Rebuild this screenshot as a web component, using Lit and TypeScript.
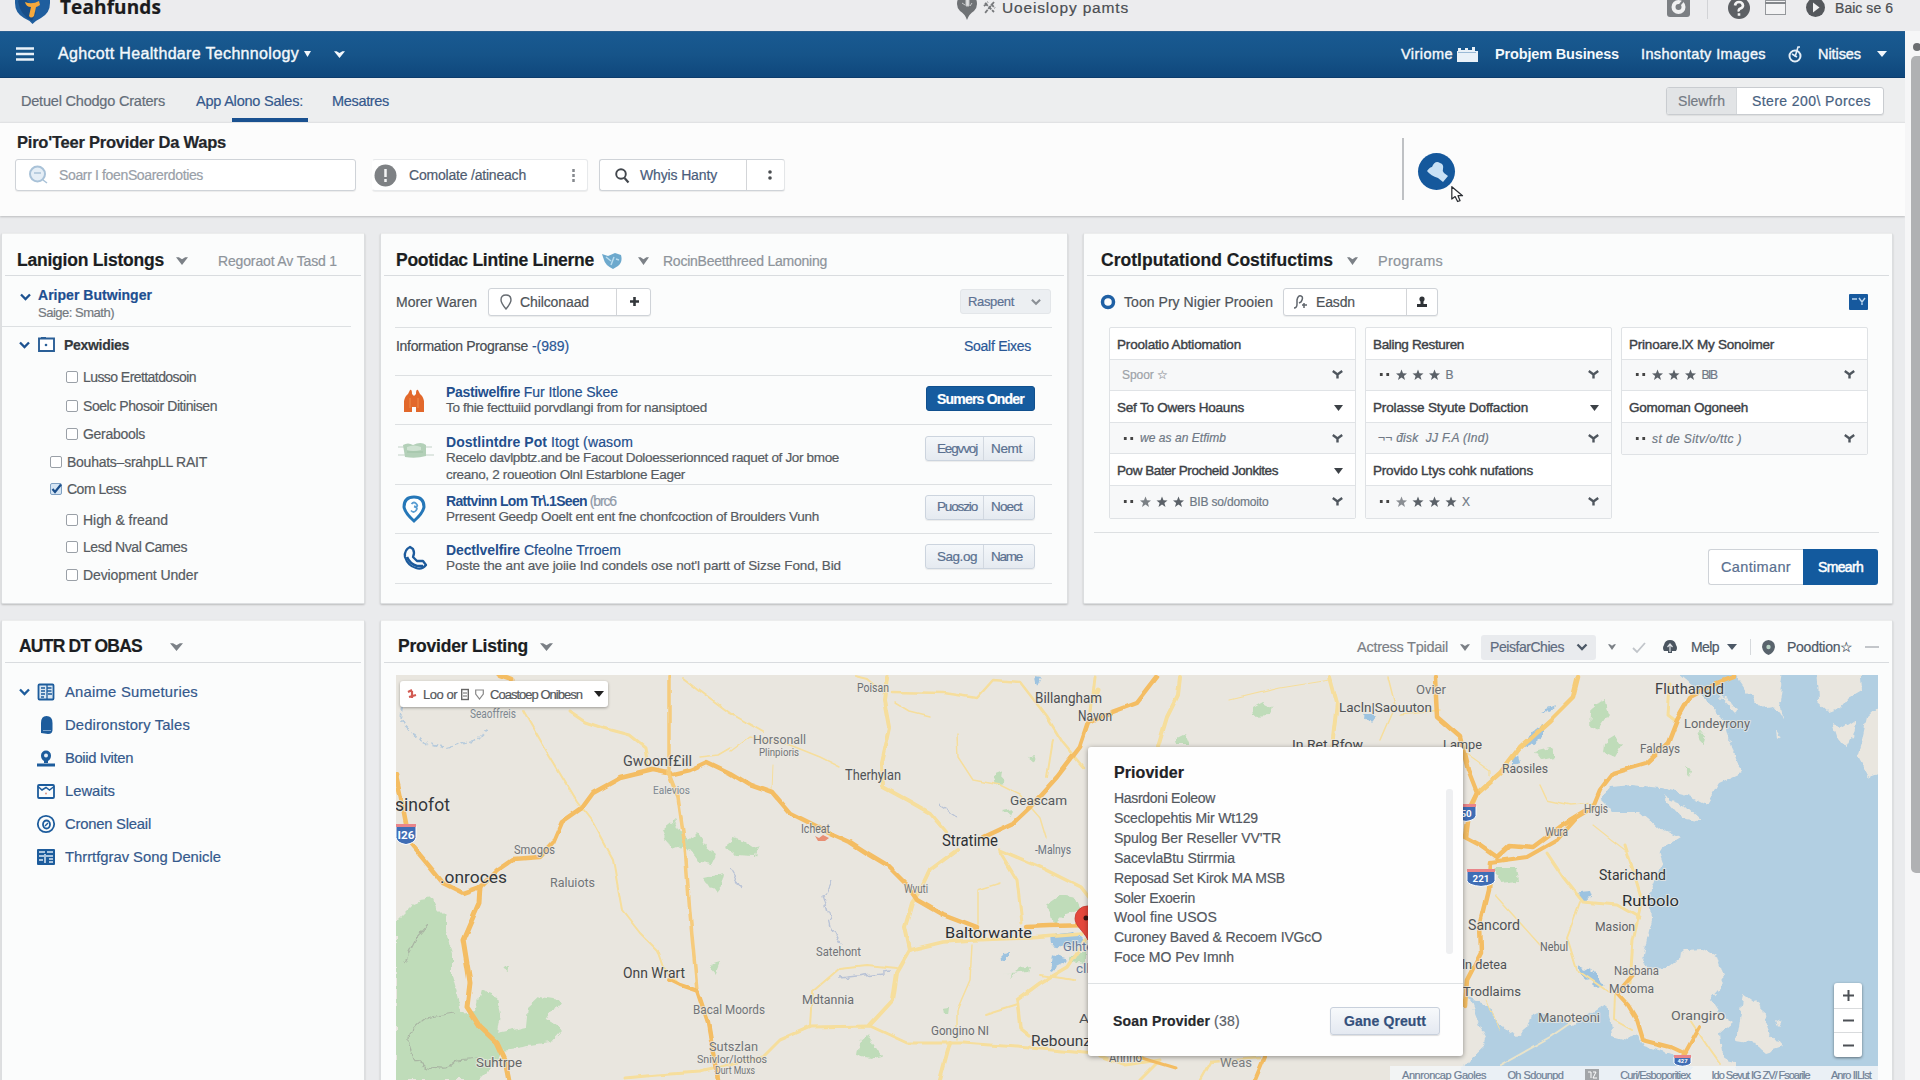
import { LitElement, html, svg, css, nothing } from "lit";
import { customElement, property } from "lit/decorators.js";

/** A single line of text tracked so that it fills a given measure. */
@customElement("fit-text")
class FitText extends LitElement {
  @property({ type: Number }) w = 0;
  @property() t = "";
  static styles = css`
    :host { display: inline-block; white-space: pre; flex: none; }
  `;
  render() {
    return html`${this.t}`;
  }
  updated() {
    this.style.letterSpacing = "0px";
    const natural = this.getBoundingClientRect().width;
    const n = [...this.t].length;
    if (this.w && n) this.style.letterSpacing = `${(this.w - natural) / n}px`;
  }
}

const T = (t: string, w: number, cls = "") => html`<fit-text class=${cls} .t=${t} .w=${w}></fit-text>`;

const caret = (w = 11, h = 7, cls = "") =>
  html`<svg class="ic ${cls}" width=${w} height=${h} viewBox="0 0 11 7" preserveAspectRatio="none"><path d="M0 .3H2.600L5.500 1.900 8.400 .3H11L5.500 7z" fill="currentColor"/></svg>`;
const tri = (w = 9, cls = "") =>
  html`<svg class="ic ${cls}" width=${w} height="6" viewBox="0 0 10 6" preserveAspectRatio="none"><path d="M0 0h10L5 6z" fill="currentColor"/></svg>`;
const chev = (cls = "", w = 11) =>
  html`<svg class="ic ${cls}" width=${w} height="8" viewBox="0 0 11 8"><path d="M1 1.500l4.500 4.500L10 1.500" fill="none" stroke="currentColor" stroke-width="2.300"/></svg>`;
const wye = (cls = "") =>
  html`<svg class="ic ${cls}" width="11" height="9" viewBox="0 0 11 9"><path d="M.8 1l4.700 3.500L10.200 1M5.500 3.500V8.500" fill="none" stroke="#4f565e" stroke-width="2.400"/></svg>`;

const star = (x: number, o = 1) =>
  svg`<path transform="translate(${x} 0)" opacity=${o} d="M5.500 .5l1.500 3.700 4 .2-3.100 2.500 1.100 4-3.500-2.300-3.500 2.300 1.100-4L0 4.400l4-.2z" fill="#5b6168"/>`;

interface Cell { k: "h" | "v"; t?: string; w?: number; c?: number; dots?: boolean; stars?: number[]; tail?: string; tw?: number; cls?: string }

const columns: Cell[][] = [
  [
    { k: "h", t: "Proolatio Abtiomation", w: 124 },
    { k: "v", t: "Spoor ☆", w: 46, c: 1, cls: "dim" },
    { k: "h", t: "Sef To Owers Hoauns", w: 127, c: 1 },
    { k: "v", dots: true, t: "we as an Etfimb", w: 86, c: 1, cls: "it" },
    { k: "h", t: "Pow Bater Procheid Jonkites", w: 161, c: 1 },
    { k: "v", dots: true, stars: [0.8, 1, 1], tail: "BIB so/domoito", tw: 79, c: 1 },
  ],
  [
    { k: "h", t: "Baling Resturen", w: 91 },
    { k: "v", dots: true, stars: [1, 1, 1], tail: "B", tw: 8, c: 1 },
    { k: "h", t: "Prolasse Styute Doffaction", w: 155, c: 1 },
    { k: "v", t: "¬¬ đisk  JJ F.A (Ind)", w: 111, c: 1, cls: "it" },
    { k: "h", t: "Provido Ltys cohk nufations", w: 160 },
    { k: "v", dots: true, stars: [0.7, 1, 1, 1], tail: "X", tw: 8, c: 1 },
  ],
  [
    { k: "h", t: "Prinoare.lX My Sonoimer", w: 145 },
    { k: "v", dots: true, stars: [1, 1, 1], tail: "BIB", tw: 15, c: 1 },
    { k: "h", t: "Gomoman Ogoneeh", w: 119 },
    { k: "v", dots: true, t: "st de Sitv/o/ttc )", w: 90, c: 1, cls: "it" },
  ],
];

const ico = {
  tower: svg`<path d="M1 24V13Q2 8 5 6L7 2Q9 1 9 6L11 8 13 6Q13 1 15 2L17 6Q20 8 21 13V24H13V19H9V24Z" fill="#e2682b"/><path d="M7 10v10M15 10v10" stroke="#f08c4b" stroke-width="1"/>`,
  card: svg`<path d="M0 8h34M0 16h36" stroke="#dfe7e2" stroke-width="2"/><path d="M5 6Q10 3 15 6Q23 2 28 6V17Q18 20 7 18Z" fill="#b3d0b8"/><path d="M9 8q7-3 14 0v3q-8 2-14 0z" fill="#cfe2d2"/><path d="M9 13h16" stroke="#9fc2a6"/>`,
  pin: svg`<path d="M11 1Q21 1 21 11Q20 17 11 25Q2 17 1 11Q1 1 11 1Z" fill="#fff" stroke="#2577b8" stroke-width="3"/><path d="M8.500 8q2.500-3 5 0t-2.500 2.500q4.500 1 2 4t-5 0" fill="none" stroke="#5a9dd2" stroke-width="1.800"/>`,
  phone: svg`<path d="M7 1Q1 4 2 11Q5 20 13 22Q19 24 23 19L20 15H14L10 11Q12 7 10 3Z" fill="none" stroke="#1c5a9c" stroke-width="2.300" stroke-linejoin="round"/><path d="M4 11Q7 18 14 20L20 20" stroke="#1c5a9c" stroke-width="2.500" fill="none"/>`,
};

interface Program { cls: string; icon: keyof typeof ico; iw: number; ih: number; bold: string; bw: number; rest: string; rw: number; dim?: boolean; desc: [string, number][]; a?: [string, number]; b?: [string, number] }

const programs: Program[] = [
  { cls: "r1", icon: "tower", iw: 22, ih: 25, bold: "Pastiwelfire", bw: 74, rest: " Fur Itlone Skee", rw: 98, desc: [["To fhie fecttuiid porvdlangi from for nansiptoed", 261]] },
  { cls: "r2", icon: "card", iw: 36, ih: 22, bold: "Dostlintdre Pot", bw: 101, rest: " Itogt (wasom", rw: 86, desc: [["Recelo davlpbtz.and be Facout Doloesserionnced raquet of Jor bmoe", 393], ["creano, 2 roueotion Olnl Estarblone Eager", 239]], a: ["Eegvvoj", 40], b: ["Nemt", 31] },
  { cls: "r3", icon: "pin", iw: 22, ih: 27, bold: "Rattvinn Lom Tr\\.1Seen", bw: 141, rest: " (brc6", rw: 29, dim: true, desc: [["Prresent Geedp Ooelt ent ent fne chonfcoction of Broulders Vunh", 373]], a: ["Puoszio", 40], b: ["Noect", 31] },
  { cls: "r4", icon: "phone", iw: 25, ih: 25, bold: "Dectlvelfire", bw: 74, rest: " Cfeolne Trroem", rw: 101, desc: [["Poste the ant ave joiie Ind condels ose not'l partt of Sizse Fond, Bid", 395]], a: ["Sag.og", 40], b: ["Name", 31] },
];

const checks: [number, string, number, boolean, boolean][] = [
  [22, "Lusso Erettatdosoin", 113, false, false],
  [29, "Soelc Phosoir Ditinisen", 134, false, false],
  [28, "Gerabools", 62, false, false],
  [28, "Bouhats–srahpLL RAIT", 140, true, false],
  [27, "Com Less", 59, true, true],
  [31, "High & freand", 85, false, false],
  [27, "Lesd Nval Cames", 104, false, false],
  [28, "Deviopment Under", 115, false, false],
];

const B = "#1d5c9c";
const menu: [any, string, number][] = [
  [svg`<rect x="1.500" y="1.500" width="15" height="15" rx="1" fill="#dbe7f2" stroke=${B} stroke-width="1.800"/><path d="M4 5h4M4 8h4M4 11h4M4 14h3M10.500 5h4M10.500 8h4M11 11h4M10 2v14" stroke=${B} stroke-width="1.300"/>`, "Anaime Sumeturies", 133],
  [svg`<path d="M4 17V7Q4 0 9.500 0 15.500 0 15.500 7V13Q16 18 11 18Z" fill=${B}/><path d="M6 14.500h8" stroke="#7ba3cc" stroke-width="1"/>`, "Dedironstory Tales", 125],
  [svg`<path d="M9 1.500a5 5 0 0 1 5 5Q14 10 11 12V14H7V12Q4 10 4 6.500A5 5 0 0 1 9 1.500Z" fill=${B}/><circle cx="9" cy="6.500" r="2" fill="#e6eff8"/><path d="M0 16h18" stroke=${B} stroke-width="3"/>`, "Boiid Iviten", 68],
  [svg`<rect x="1" y="3" width="16" height="13" rx="1" fill="none" stroke=${B} stroke-width="1.800"/><path d="M1 4.500L5 8 9 5.500 12.500 8 17 4.500M5 2v2M13 2v2" fill="none" stroke=${B} stroke-width="1.500"/><circle cx="9" cy="11.500" r="1" fill="#d98"/>`, "Lewaits", 50],
  [svg`<circle cx="9" cy="9" r="8.200" fill="none" stroke=${B} stroke-width="1.800"/><ellipse cx="9.500" cy="9.500" rx="3.500" ry="4" fill="none" stroke=${B} stroke-width="1.800"/><path d="M8 11l3-3" stroke=${B} stroke-width="1.500"/>`, "Cronen Sleail", 86],
  [svg`<rect x="0" y="1" width="18" height="16" rx="1" fill=${B}/><path d="M2 4h6M10 4h6M2 8h5M2 12h4M9 8h7M12 11h4M12 14h4M8 6v9" stroke="#dbe8f4" stroke-width="1.500"/>`, "Thrrtfgrav Song Denicle", 156],
];

const road = (pts: string, w: number, c = "#f6c063") =>
  svg`<polyline points=${pts} fill="none" stroke=${c} stroke-width=${w} stroke-linejoin="round" stroke-linecap="round"/>`;

const Y = "#f6de9c";
const O = "#f4bd63";
const roads: [string, number, string][] = [
  ["523,710 550,757 577,802 593,823 613,860 622,910 640,933 657,950 663,967 680,985", 2, Y],
  ["570,712 585,722 600,727 630,735 645,747 648,767", 3, Y],
  ["683,678 703,693 730,713 763,732", 2, Y],
  ["730,752 750,737 790,745 820,757 840,767", 1.500, Y],
  ["700,757 718,755 730,748", 1.500, Y],
  ["773,765 772,790", 1, Y],
  ["855,676 867,679 880,690", 2, Y],
  ["888,677 885,700 890,727 882,763 883,787 907,800 930,813 947,833", 4, Y],
  ["892,692 943,693 977,698 993,680 1020,682 1047,717 1063,743 1083,767", 2.500, Y],
  ["895,703 910,712 930,717", 1.500, Y],
  ["957,735 958,757 973,780 1000,785 1020,795 1040,818 1046,838", 1.500, Y],
  ["1053,740 1047,777", 2, Y],
  ["957,850 930,870 922,887 912,903 905,927 910,950 897,973 893,1000 870,1025", 4, Y],
  ["910,950 943,942 973,940 1030,938 1082,934", 3.500, Y],
  ["897,968 867,965 840,968 812,992 810,1027", 2, Y],
  ["625,1078 657,1075 700,1072 763,1057 780,1040 810,1027 870,1026 907,1043 963,1043 1030,1048 1095,1054", 3, Y],
  ["950,1043 940,1080", 4, Y],
  ["1000,850 1040,867 1080,887 1090,900", 3.500, Y],
  ["1000,852 1017,880 1022,923", 3, Y],
  ["978,925 978,890 1000,883", 1.500, Y],
  ["957,1040 957,1010 970,980 972,945", 1.500, Y],
  ["1085,940 1067,967 1040,983 1017,1000 1020,1027 1030,1035", 3.500, Y],
  ["1017,1005 985,1015", 2, Y],
  ["1040,975 1075,980", 2, Y],
  ["1180,677 1178,695 1167,717 1158,747", 4, Y],
  ["1095,677 1090,720 1080,747", 3, Y],
  ["1098,690 1094,700", 5, Y],
  ["1230,700 1280,688 1330,680", 1.200, Y],
  ["1330,677 1337,703 1332,747", 4, Y],
  ["1388,677 1395,705 1380,740", 1.500, Y],
  ["1400,715 1440,710", 1.500, Y],
  ["1100,1056 1125,1065 1160,1060 1140,1080", 3, Y],
  ["1200,1080 1210,1062 1260,1058", 2.500, Y],
  ["1578,677 1573,697 1550,720 1520,747 1500,773 1477,793 1472,805", 4.500, "#f6cc78"],
  ["1540,785 1547,800 1570,805 1595,803", 1.500, Y],
  ["1466,753 1490,770 1490,775", 1.200, Y],
  ["1670,685 1668,715 1677,722", 3, Y],
  ["1625,845 1633,870 1642,900 1633,940 1630,983", 3, Y],
  ["1547,853 1563,877 1583,902 1617,905 1640,918", 3, Y],
  ["1580,902 1567,937 1577,970 1610,993", 2, Y],
  ["1495,895 1540,945", 1.500, Y],
  ["1593,825 1612,840 1625,850", 1.200, Y],
  ["1575,1020 1550,1037 1500,1065", 2, "#e9e3c9"],
  ["1615,995 1614,1020 1632,1030", 2, Y],
  ["1690,1020 1710,1050 1720,1064", 2, Y],
  ["1487,1000 1500,1030", 1, Y],
  ["396,775 400,793 410,843 430,867 443,883 463,893 480,887 497,870 513,859 540,857 553,843 562,822 582,808 593,793 620,778 653,770 673,774 690,770 707,762 730,773 750,785 773,793 790,813 810,823 830,833 850,842 867,853 887,865 907,885 917,900 943,915 977,928", 4.500, O],
  ["1027,927 1050,926 1090,925", 4.500, O],
  ["480,887 479,903 463,940 470,983 467,1007 480,1027 497,1043 505,1060 509,1080", 5, O],
  ["669,676 669,774 678,797 685,847 690,913 697,990 708,1023 713,1053 718,1080", 3.500, "#f6cb7b"],
  ["670,980 680,985 698,991", 4, O],
  ["697,990 708,1023 713,1053 718,1080", 4.500, O],
  ["500,676 512,680", 5, O],
  ["983,837 1013,823 1030,807 1057,777 1080,747 1088,723 1110,713 1137,703 1157,677", 4.500, O],
  ["1435,677 1437,717 1460,737 1468,770 1477,793 1470,807 1466,837", 4.500, O],
  ["1733,677 1717,683 1690,697 1677,720 1668,743 1647,763 1613,773 1600,790 1593,807 1560,827 1533,847 1510,845 1497,857 1480,845 1463,836", 4.500, O],
  ["1490,862 1527,857 1557,840 1575,820", 4, O],
  ["1490,862 1488,890 1480,923 1481,953 1467,980 1465,1005", 4.500, O],
  ["1633,975 1617,993 1628,1005 1637,1020 1643,1040 1670,1047 1685,1054 1700,1027", 4, O],
  ["1265,1056 1255,1080", 4, O],
  ["1135,1056 1175,1068", 3, O],
];

const labels: [string, number, number, number, number?, string?][] = [
  ["Seaoffreis", 470, 718, 46, 12, "#7d8790"],
  ["Gwoonf£ill", 623, 766, 69, 15],
  ["Ealevios", 653, 794, 37, 11.500, "#7d8790"],
  ["sinofot", 395, 811, 55, 18, "#33373b"],
  ["Smogos", 514, 854, 41, 12.500, "#727578"],
  [".onroces", 440, 883, 67, 17, "#33373b"],
  ["Raluiots", 550, 887, 45, 12.500, "#727578"],
  ["Onn Wrart", 623, 978, 62, 14.500, "#444"],
  ["Bacal Moords", 693, 1014, 72, 12.500, "#727578"],
  ["Sutszlan", 709, 1051, 49, 12, "#727578"],
  ["Snivlor/lotthos", 697, 1063, 70, 11.500, "#727578"],
  ["Durt Muxs", 715, 1074, 40, 11, "#727578"],
  ["Suhtrpe", 476, 1067, 46, 13, "#666"],
  ["Poisan", 857, 692, 32, 12.500, "#6d7073"],
  ["Horsonall", 753, 744, 53, 12, "#727578"],
  ["Plinpioris", 759, 756, 40, 11.500, "#727578"],
  ["Therhylan", 845, 780, 56, 14, "#505356"],
  ["Billangham", 1035, 703, 67, 14, "#4a4d50"],
  ["Navon", 1078, 721, 34, 14, "#505356"],
  ["Geascam", 1010, 805, 57, 13.500, "#55585b"],
  ["Icheat", 801, 833, 29, 12, "#6d7073"],
  ["Stratime", 942, 846, 56, 16, "#2d3033"],
  ["-Malnys", 1035, 854, 36, 12, "#6a7480"],
  ["Wvuti", 904, 893, 24, 12, "#727578"],
  ["Baltorwante", 945, 938, 87, 15.500, "#2d3033"],
  ["Satehont", 816, 956, 45, 12, "#727578"],
  ["Mdtannia", 802, 1004, 52, 12.500, "#6a6d70"],
  ["Gongino NI", 931, 1035, 58, 12.500, "#6a6d70"],
  ["Rebounz", 1031, 1046, 60, 15, "#3b3e41"],
  ["Glhte", 1063, 951, 30, 13, "#66799a"],
  ["clb", 1076, 973, 18, 13, "#66799a"],
  ["A", 1079, 1023, 10, 13, "#505356"],
  ["Annno", 1109, 1062, 33, 12, "#66696c"],
  ["Weas", 1220, 1067, 32, 12.500, "#7a7d80"],
  ["Ovier", 1416, 694, 30, 12.500, "#6d7073"],
  ["Lacln|Saouuton", 1339, 712, 93, 13.500, "#505356"],
  ["In Ret Rfow", 1292, 749, 71, 13.500, "#44474a"],
  ["Lampe", 1443, 749, 39, 13.500, "#505356"],
  ["Raosiles", 1502, 773, 46, 13, "#606366"],
  ["Fluthangld", 1655, 694, 69, 14.500, "#3f4245"],
  ["Londeyrony", 1684, 728, 66, 12.500, "#65686b"],
  ["Faldays", 1640, 753, 40, 12, "#6a6d70"],
  ["Hrgis", 1584, 813, 24, 12, "#6a6d70"],
  ["Wura", 1545, 836, 23, 12, "#6a6d70"],
  ["Starichand", 1599, 880, 67, 14, "#34373a"],
  ["Rutbolo", 1622, 906, 57, 14.500, "#2d3033"],
  ["Sancord", 1468, 930, 52, 14, "#505356"],
  ["Masion", 1595, 931, 40, 12.500, "#606366"],
  ["Nebul", 1540, 951, 28, 12.500, "#65686b"],
  ["ln detea", 1462, 969, 45, 13.500, "#505356"],
  ["Nacbana", 1614, 975, 45, 12, "#6a6d70"],
  ["Motoma", 1609, 993, 45, 12.500, "#65686b"],
  ["Trodlaims", 1463, 996, 58, 13.500, "#505356"],
  ["Manoteoni", 1538, 1022, 62, 12.500, "#65686b"],
  ["Orangiro", 1671, 1020, 54, 12.500, "#65686b"],
];

const greens = [
  "396,920 413,903 420,900 433,898 437,907 447,917 447,930 452,953 452,975 457,993 460,1013 475,1010 480,990 497,997 500,1015 497,1033 527,1027 529,1007 540,997 560,1000 547,1020 562,1030 550,1043 503,1050 495,1065 480,1080 396,1080",
  "663,830 675,820 682,835 690,840 697,833 705,845 717,855 712,865 698,862 685,845 672,850",
  "705,878 725,874 722,885 715,893",
  "730,838 745,842 757,850 755,856 735,855 727,850",
  "859,1043 868,1035 875,1045 882,1055 870,1058 857,1055",
  "1252,708 1263,702 1275,708 1270,716 1253,717",
  "1175,738 1185,733 1190,745 1176,745",
  "1592,705 1605,700 1608,715 1598,730 1590,725",
  "1605,742 1615,736 1622,745 1615,757 1604,752",
  "1046,905 1060,895 1075,898 1080,910 1065,915 1055,925 1052,912",
  "1495,868 1517,868 1519,882 1500,884",
  "1697,732 1706,733 1703,744",
  "993,774 1003,770 1002,782 995,784",
  "1028,757 1037,756 1035,763",
  "1003,812 1013,810 1010,818",
  "943,1008 951,1007 950,1016 944,1015",
  "1003,975 1012,974 1010,980 1018,968 1030,966 1028,972",
  "710,965 720,962 716,972",
  "503,968 510,966 510,972",
  "1534,752 1550,748 1555,757 1540,760",
  "1070,955 1085,952 1085,965 1074,962",
  "1684,768 1691,770 1689,777",
];

const shield = (x: number, y: number, t: string, w = 20, h = 16) => svg`
  <path d="M${x} ${y}h${w}v${h * 0.65}q-1 ${h * 0.3} -${w / 2} ${h * 0.38}q-${w / 2 - 1} -${h * 0.08} -${w / 2} -${h * 0.38}z" fill="#3f6db5" stroke="#fff" stroke-width="1"/>
  <path d="M${x} ${y - 2}h${w}v3h-${w}z" fill="#e9858a"/>
  <text x=${x + w / 2} y=${y + h * 0.72} text-anchor="middle" font-size=${h * 0.65} font-weight="700" fill="#fff">${t}</text>`;

@customElement("map-canvas")
class MapCanvas extends LitElement {
  static styles = css`
    :host { display: block; width: 1482px; height: 405px; }
    svg { display: block; font-family: Roboto, "Liberation Sans", sans-serif; }
    .lb { paint-order: stroke; stroke: #ebe9e3; stroke-opacity: .75; stroke-width: 2px; stroke-linejoin: round; }
  `;
  render() {
    return html`<svg width="1482" height="405" viewBox="396 675 1482 405">
      <defs>
        <filter id="rough" x="-5%" y="-5%" width="110%" height="110%">
          <feTurbulence type="fractalNoise" baseFrequency="0.09" numOctaves="3" seed="4"/>
          <feDisplacementMap in="SourceGraphic" scale="9" xChannelSelector="R" yChannelSelector="G"/>
        </filter>
        <filter id="wobble" filterUnits="userSpaceOnUse" x="390" y="670" width="1500" height="420">
          <feTurbulence type="fractalNoise" baseFrequency="0.05" numOctaves="2" seed="9"/>
          <feDisplacementMap in="SourceGraphic" scale="4" xChannelSelector="R" yChannelSelector="G"/>
        </filter>
      </defs>
      <rect x="396" y="675" width="1482" height="405" fill="#e9e6df"/>
      <g filter="url(#rough)">
        <path fill="#b2cfe2" d="M1668 665 L1693 687 1707 700 1718 712 1727 727 1733 750 1742 773 1720 783 1713 795 1707 805 1687 795 1660 788 1633 785 1610 787 1601 800 1613 812 1640 812 1657 827 1680 838 1660 850 1664 862 1658 872 1650 893 1652 920 1647 940 1643 960 1647 968 1667 967 1687 950 1702 949 1717 957 1725 983 1710 1000 1718 1012 1733 1022 1720 1033 1722 1053 1735 1062 1735 1090 1895 1090 1895 660Z"/>
        <path fill="#b2cfe2" d="M1469 998 L1490 1007 1498 1025 1517 1037 1528 1028 1532 1015 1545 1012 1560 1020 1575 1024 1607 1003 1612 1035 1627 1039 1640 1036 1645 1046 1673 1055 1692 1068 1692 1090 1450 1090 1468 1062 1488 1043 1480 1027Z"/>
        <g fill="#e9e6df">
          <path d="M1728 665L1747 692 1760 707 1772 705 1783 719 1780 700 1785 665Z"/>
          <path d="M1815 665L1817 700 1830 712 1841 708 1850 697 1862 690 1860 665Z"/>
          <path d="M1890 695L1867 717 1862 740 1857 757 1868 777 1890 768Z"/>
          <path d="M1833 723L1845 728 1857 720 1853 737 1847 749 1838 738Z"/>
          <path d="M1663 797L1685 805 1702 821 1680 817Z"/>
          <path d="M1744 993L1763 1007 1765 1020 1770 1033 1783 1048 1767 1053 1755 1043 1737 1040 1740 1020Z"/>
          <path d="M1776 1020l6 3-4 4z M1718 695l20 12-3 6z M1776 730l4 6-3 2z"/>
        </g>
        <path fill="#9dc3e0" d="M1535 728l8-4 0 12-12 10-10 4 5-8zM1542 712l12-5-3 6zM1050 935l25-3 8 8-12 8-20-3zM1052 955l18 5-20 10zM1002 952l6-1 0 8-5 1zM1578 965l12 5 15 15-6 3-18-15zM1578 893l12-1 2 6-12 2zM1512 758l6-4 2 8-8 3z M1035 676l6 1-4 10z M1364 715l14 0-7 8z"/>
        <g fill="#bfdcb9">${greens.map((p) => svg`<polygon points=${p}/>`)}</g>
        <path d="M402 705l-2 15 22 22 25 6 30-8 10-12" fill="none" stroke="#b7cbdc" stroke-width="2" stroke-dasharray="5 3"/>
        <path d="M405 960l10-20 14-16M455 1013l-30 5q-22 15-14 34t36 17l10-9 22-2" fill="none" stroke="#a9b5a3" stroke-width="1.200"/>
        <path d="M830 880l-7 15 3 10 5 20 10 20M730 868l12 20M840 978l50-6M940 805l18 12" fill="none" stroke="#b9c3d6" stroke-width="1.300"/>
      </g>
      <g filter="url(#wobble)">${roads.map(([p, w, c]) => road(p, w, c))}</g>
      <path d="M815 836l4 2 4-3 6 3-4 3-7 0z" fill="#e88f74"/>
      ${shield(396, 826, "I26", 20, 18)}
      ${shield(1456, 806, "50", 20, 15)}
      ${shield(1467, 871, "221", 28, 15)}
      ${shield(1674, 1057, "427", 17, 9)}
      ${labels.map(([t, x, y, w, s = 13, c = "#4a4d50"]) => svg`<text class="lb" x=${x} y=${y} textLength=${w} lengthAdjust="spacingAndGlyphs" font-size=${s} fill=${c}>${t}</text>`)}
      <path d="M1088 940C1083 930 1075 926 1075 918.500A12.500 12.500 0 0 1 1100 918.500C1100 926 1092 930 1088 940Z" fill="#e4483c" stroke="#c5372e" stroke-width=".8"/>
      <circle cx="1086" cy="918" r="2.500" fill="#3a1512"/>
    </svg>`;
  }
}

@customElement("app-root")
class AppRoot extends LitElement {
  static styles = css`
    :host { display: block; width: 1920px; height: 1080px; overflow: hidden; background: #eaebed;
      font-family: "Liberation Sans", Arial, sans-serif; font-size: 14px; line-height: 1; color: #454b52; }
    * { box-sizing: border-box; }
    .ic { flex: none; display: block; overflow: visible; }
    .f, .top, .nav, .tabs, .head, .hit { display: flex; align-items: center; }
    .push { margin-left: auto; }
    .ml2 { margin-left: 2px; } .ml4 { margin-left: 4px; } .ml8 { margin-left: 8px; } .ml12 { margin-left: 12px; } .ml16 { margin-left: 16px; }
    fit-text { -webkit-text-stroke: .2px currentColor; }

    .top { height: 31px; padding: 0 27px 16px 15px; background: #ececee; overflow: hidden; font-size: 15.500px; color: #4b4e52; }
    .brand { font: 700 19px/1 "Open Sans", sans-serif; color: #1b1b1d; margin-left: 10px; }
    .mid { margin-left: 796px; gap: 6px; }
    .util { margin-left: auto; }
    .util .sep { width: 1px; height: 22px; background: #d2d3d6; margin: 0 20px 0 17px; }
    .util .win { margin: 0 20px 0 15px; }
    .util .who { font-size: 14px; margin-left: 10px; }

    .body { display: flex; height: 1049px; }
    .page { width: 1905px; flex: none; }
    .rail { width: 15px; background: #f6f6f7; padding: 12px 0 0 6px; color: #666; }
    .thumb { width: 9px; height: 817px; margin-top: 5px; border-radius: 5px 0 0 5px; background: #b0b1b3; }

    .nav { height: 47px; padding: 0 18px 1px 16px; color: #f3f8fc; font-size: 14.500px;
      background: linear-gradient(#195a92, #165489 50%, #0f477c); border-top: 1px solid #2b6091; border-bottom: 1px solid #0d3c6c; }
    .nav .title { font-size: 16px; margin: 0 5px 0 24px; }
    .nav .title, .nav .r fit-text { -webkit-text-stroke: .4px currentColor; }
    .nav .r { margin-left: auto; }
    .nav .r .b { font-weight: 700; -webkit-text-stroke: 0; margin: 0 22px 0 17px; }
    .nav .tri1 { margin-right: 23px; }
    .apple { margin: 0 16px 0 22px; }

    .tabs { height: 44px; padding: 0 21px; background: #edeeef; align-items: stretch; font-size: 14.500px; color: #646d79; }
    .tab { display: flex; align-items: center; position: relative; padding-top: 3px; }
    .tab.on { margin: 0 29px 0 31px; }
    .tab.blue { color: #34588c; }
    .ul { position: absolute; left: 36px; bottom: 0; width: 76px; height: 4px; background: #1a5190; }
    .seg { display: flex; margin: 9px 0 0 auto; height: 28px; border: 1px solid #c9ccd0; border-radius: 3px; background: #fff; overflow: hidden; box-shadow: 0 1px 1px #0001; }
    .seg > div { display: flex; align-items: center; }
    .seg .l { width: 70px; padding-left: 11px; background: #e2e4e6; color: #757b84; font-size: 14px; border-right: 1px solid #d5d8db; }
    .seg .rr { padding: 0 12px 0 15px; color: #47617f; font-size: 14px; }

    .search { height: 94px; background: #fcfcfc; border-top: 1px solid #e1e2e4; box-shadow: 0 1px 2px #0003; padding: 10px 15px 0; display: flex; }
    .search h1 { margin: 0 0 7px 2px; font-size: 16.500px; line-height: 19px; color: #23262a; }
    .box { display: flex; align-items: center; background: #fff; border: 1px solid #cfd3d8; border-radius: 3px; box-shadow: 0 1px 1px #0001; }
    .b1 { width: 341px; height: 32px; padding-left: 12px; color: #99a0a8; }
    .b1 fit-text { margin-left: 11px; }
    .b2 { width: 216px; height: 32px; border-color: #e7e9eb; border-left-color: transparent; margin-left: 16px; padding: 0 12px 0 1px; color: #4f5c70; }
    .b2 fit-text { margin-left: 12px; }
    .b3 { width: 186px; height: 32px; margin-left: 11px; padding-left: 15px; color: #4a5d7c; border-right-color: #e4e6e8; }
    .b3 fit-text { margin: 0 29px 0 11px; }
    .b3 .dv { width: 1px; height: 30px; background: #d3d5d8; margin-right: 21px; }
    .vline { width: 2px; height: 62px; background: #bfc1c4; margin: 5px 0 0 617px; }
    .round { width: 37px; height: 37px; border-radius: 50%; background: #15589c; margin: 20px 0 0 14px; position: relative; }
    .cursor { position: absolute; left: 33px; top: 32px; }

    .grid { display: grid; grid-template-columns: 364px 688px 810px; grid-template-rows: 371px 480px; gap: 16px 15px; padding: 17px 0 0 1px; }
    .card { background: #fbfcfc; border: 1px solid #dcdee0; border-top-color: #eceded; border-radius: 2px; box-shadow: 0 1px 2px #0003; }
    .wide { grid-column: 2 / 4; }
    .head { height: 42px; margin: 0 3px; padding: 11px 0 0 12px; border-bottom: 1px solid #d9dcdf; color: #7c8187; }
    .card:nth-child(-n+3) .head { padding-top: 13px; }
    .head h2 { margin: 0; font-size: 17.500px; color: #1b1e22; display: flex; }
    .head .sub { color: #8e949b; }
    .head .sub.lg { font-size: 14.500px; margin-left: 20px; }
    .line { height: 1px; background: #dde0e2; }

    /* tree card */
    .acct { height: 50px; padding: 12px 0 0 18px; display: flex; }
    .acct .ic { margin: 5px 7px 0 0; }
    .acct b { display: block; color: #1e4f91; height: 17px; }
    .acct span { font-size: 13px; color: #74797f; }
    .short { margin-right: 13px; }
    .blue { color: #2a5796; }
    .navy { color: #1d5291; }
    .grp { padding-left: 17px; height: 35px; font-weight: 700; color: #34383c; }
    .grp .fold { margin: 0 9px 0 8px; }
    .chk { display: flex; align-items: flex-end; padding-left: 64px; color: #565b61; }
    .chk.up { padding-left: 48px; }
    .chk i { width: 12px; height: 12px; border: 1px solid #9aa0a7; border-radius: 2px; margin: 0 5px 1px 0; background: #fff; }
    .chk i.on { background: #d5e5f4; border-color: #7fa0c2; }
    .chk i svg { display: block; overflow: visible; }

    /* programmes card */
    .bar { height: 51px; padding: 0 16px 0 15px; color: #4e5358; }
    .inp { height: 28px; margin-left: 11px; }
    .inp .dv { width: 1px; height: 26px; background: #d3d5d8; }
    .in2 { width: 163px; padding-left: 11px; }
    .in3 { width: 155px; margin-left: 10px; padding-left: 9px; }
    .ring { margin-left: 1px; }
    .rq { height: 25px; width: 91px; background: #eceff2; border-radius: 3px; border: 1px solid #e3e6e9; color: #5c7193; margin-left: auto; font-size: 13px; padding-left: 7px; }
    .rq .ic { color: #8b9096; margin-left: 17px; }
    .ln2 { margin: 0 15px 0 14px; }
    .info { height: 47px; padding: 0 36px 11px 15px; color: #484d53; }
    .hit { margin: 0 15px 0 14px; border-bottom: 1px solid #dde0e2; padding: 0 17px 0 0; }
    .hit .icw { width: 51px; padding-left: 8px; }
    .r1 { height: 49px; } .r2 { height: 60px; } .r3 { height: 49px; } .r4 { height: 50px; }
    .r2 .icw { padding-left: 3px; align-self: flex-start; padding-top: 14px; }
    .r2 .tx { padding-top: 8px; }
    .hit .tt { height: 16px; line-height: 16px; color: #234f8d; display: flex; white-space: pre; }
    .hit .tt .bb { font-weight: 700; -webkit-text-stroke: 0; }
    .hit .tt .dim { color: #8f99a8; }
    .hit p { margin: 0; font-size: 13.500px; line-height: 16.500px; color: #565b61; }
    .prim { width: 109px; height: 25px; background: #165c9f; color: #fff; font-weight: 700; border-radius: 3px; display: flex; align-items: center; justify-content: center; margin: 0 0 3px auto; border: 1px solid #10508e; }
    .pair { width: 110px; height: 25px; border: 1px solid #ccd4de; border-radius: 3px; background: linear-gradient(#f4f7fa, #e5eaf0); display: flex; align-items: center; margin: 0 0 4px auto; color: #5a7090; font-size: 13.500px; padding-left: 11px; box-shadow: 0 1px 1px #0001; }
    .pair.tp { align-self: flex-start; margin-top: 11px; }
    .pair i { width: 1px; height: 23px; background: #d2d8e0; margin: 0 7px 0 6px; }

    /* form card */
    .cols { display: grid; grid-template-columns: 247px 247px 247px; gap: 9px; margin: 0 0 0 25px; align-items: start; height: 205px; }
    .col { border: 1px solid #dfe2e5; border-radius: 2px; background: #fff; }
    .cell { display: flex; align-items: center; height: 31.600px; border-bottom: 1px solid #e0e3e6; padding: 0 12px 0 7px; color: #3c4146; font-size: 13.500px; }
    .cell:last-child { border-bottom: 0; }
    .cell.h { padding-top: 3px; }
    .cell.h fit-text { -webkit-text-stroke: .4px currentColor; }
    .cell.v { background: #f7f8f9; padding-left: 12px; color: #6f7885; font-size: 12px; }
    .cell .ic:last-child { margin-left: auto; }
    .it { font-style: italic; }
    .dim { color: #9da2a8; }
    .dots { width: 12px; height: 3px; margin-right: 6px; background: radial-gradient(circle, #444 1.400px, transparent 1.800px) 0 0 / 6.500px 3px; }
    .rule3 { margin: 0 13px 0 10px; }
    .badge { margin: 0 8px 0 auto; }
    .acts { display: flex; margin: 16px 14px 0 auto; width: 170px; height: 36px; }
    .acts div { display: flex; align-items: center; justify-content: center; }
    .acts .a { width: 95px; border: 1px solid #cfd3d8; border-right: 0; border-radius: 3px 0 0 3px; background: #fff; color: #5a7090; font-size: 14.500px; }
    .acts .b { width: 75px; background: #135a9e; color: #fff; border-radius: 0 3px 3px 0; }
    .acts .b fit-text { -webkit-text-stroke: .5px currentColor; }

    /* menu card */
    .mi { height: 32.900px; display: flex; align-items: center; padding-left: 35px; color: #34598c; font-size: 14.800px; }
    .mi.first { padding-left: 17px; }
    .mi.first .chv { margin-right: 7px; color: #1d5c9c; }
    .mi fit-text { margin-left: 10px; }
    .menu { padding-top: 13px; }
    .gap28 { margin-left: 28px; }

    /* map card */
    .mhead { padding-right: 10px; color: #7b8086; }
    .act { font-size: 14.500px; }
    .pf { height: 25px; width: 115px; background: #e9ebee; border-radius: 3px; color: #5f6c80; padding: 0 8px 0 9px; margin: 0 12px 0 11px; justify-content: space-between; }
    .dk { color: #4c5866; }
    .tick { margin-left: 16px; }
    .cloud { margin: 0 14px 0 17px; }
    .vsep { width: 1px; height: 16px; background: #d6d9dc; margin: 0 11px 0 13px; }
    .spot { margin-right: 12px; }
    .dash { width: 14px; height: 2px; background: #c3c6ca; margin-left: 12px; }
    .mapw { position: relative; margin: 12px 0 0 15px; width: 1482px; height: 405px; overflow: hidden; }
    .filter { position: absolute; left: 4px; top: 6px; width: 208px; height: 26px; background: #fff; border-radius: 3px; box-shadow: 0 1px 3px #0005; display: flex; align-items: center; padding-left: 7px; font-size: 13px; color: #55585c; }
    .filter .g5 { margin-left: 5px; }
    .filter .tag { margin: 0 6px; }
    .filter .end { margin-left: 12px; color: #222; }
    .pop { position: absolute; left: 692px; top: 72px; width: 375px; height: 309px; background: #fefefe; border-radius: 3px; box-shadow: 0 1px 5px #0006; }
    .pop .up { height: 237px; padding: 16px 10px 0 26px; border-bottom: 1px solid #dfe2e4; display: flex; justify-content: space-between; }
    .pop h3 { margin: 0 0 6px; font-size: 16px; line-height: 20px; color: #1f2226; }
    .pop ul { list-style: none; margin: 0; padding: 0; line-height: 19.900px; font-size: 14px; color: #53585f; }
    .pop .sb { width: 7px; height: 165px; margin-top: 26px; background: #eeeff1; border-radius: 3px; }
    .pop .dn { height: 72px; padding: 2px 23px 0 25px; display: flex; align-items: center; color: #5b6067; }
    .pop .dn b { color: #25282c; margin-right: 4px; }
    .pop .btn { margin-left: auto; width: 110px; height: 28px; border: 1px solid #c8d0dc; border-radius: 3px; background: linear-gradient(#f7f9fb, #e4e9f1); display: flex; align-items: center; justify-content: center; color: #34507c; font-weight: 700; box-shadow: 0 1px 1px #0002; }
    .zoom { position: absolute; left: 1438px; top: 308px; width: 28px; height: 74px; background: #fff; border-radius: 3px; box-shadow: 0 1px 3px #0007; display: grid; grid-template-rows: 25px 24px 25px; }
    .zoom span { display: grid; place-items: center; border-top: 1px solid #d9dbdd; }
    .zoom span:first-child { border: 0; }
    .attr { position: absolute; right: 0; bottom: 0; width: 488px; height: 14px; background: #f3f6f8d9; display: flex; padding: 3px 7px 0 12px; font-size: 11px; color: #6f8095; overflow: hidden; justify-content: space-between; }
    .attr fit-text { line-height: 12px; }
  `;

  private cell(c: Cell) {
    return html`<div class="cell ${c.k}">
      ${c.dots ? html`<span class="dots"></span>` : nothing}
      ${c.t ? T(c.t, c.w!, c.cls ?? "") : nothing}
      ${c.stars ? html`<svg class="ic" width=${c.stars.length * 16.500} height="11">${c.stars.map((o, i) => star(i * 16.500, o))}</svg>` : nothing}
      ${c.tail ? T(c.tail, c.tw!) : nothing}
      ${c.c ? (c.k === "h" ? tri(9) : wye()) : nothing}
    </div>`;
  }

  render() {
    return html`
    <header class="top">
      <svg class="ic" width="35" height="46" viewBox="0 0 35 46"><path d="M0 4H35V18Q35 28 26 33Q20 36 17.500 39Q14 35 9 33Q0 28 0 18Z" fill="#1f5e9e"/><path d="M3 16q5-5 8-2l10 14-4 8Q5 30 3 16Z" fill="#174d88"/><path d="M10 17q7 3 14-1l1 4q-3 2-4 2l-2 9q-3 3-5 0l2-9q-5 0-6-5Z" fill="#f5a93c"/></svg>
      ${T("Teahfunds", 101, "brand")}
      <div class="f mid">
        <svg class="ic" width="20" height="26" viewBox="0 0 20 26"><path d="M10 25Q8 19 3 16Q0 13 0 9Q0 0 10 0T20 9Q20 13 17 16Q12 19 10 25Z" fill="#6f7275"/><path d="M9 3h3v8H9zM5 8l3 2M15 8l-2 3" fill="#dfe0e1" stroke="#c9cacb"/></svg>
        <svg class="ic" width="13" height="13" viewBox="0 0 13 13"><path d="M2 2l9 9M11 1L2 12M1 5l4-4M8 3l4 4" stroke="#77797c" stroke-width="1.800" fill="none" stroke-dasharray="4 1"/></svg>
        ${T("Uoeislopy pamts", 127)}
      </div>
      <div class="f util">
        <svg class="ic" width="23" height="22" viewBox="0 0 23 22"><rect x="0" y="-4" width="23" height="24" rx="3" fill="#7c7f83"/><circle cx="11.500" cy="10" r="7" fill="#f1f1f2"/><circle cx="11.500" cy="10" r="3" fill="#7c7f83"/><path d="M11 10l5-6" stroke="#7c7f83" stroke-width="2"/></svg>
        <span class="sep"></span>
        <svg class="ic" width="22" height="22" viewBox="0 0 22 22"><circle cx="11" cy="11" r="11" fill="#5d6064"/><path d="M7 8.500Q7.500 5 11 5T15 8.500Q15 10.500 12.500 11.500T11 14.500M11 16.200v2.600" fill="none" stroke="#f4f4f4" stroke-width="2.600"/></svg>
        <svg class="ic win" width="21" height="15" viewBox="0 0 21 15"><rect x=".5" y=".5" width="20" height="14" fill="#f3f3f4" stroke="#94979b"/><path d="M0 3h21" stroke="#85888c" stroke-width="2"/></svg>
        <svg class="ic" width="19" height="19" viewBox="0 0 19 19"><circle cx="9.500" cy="9.500" r="9.500" fill="#55585c"/><path d="M7 4.500l6.500 5L7 14.500z" fill="#f2f2f2"/></svg>
        ${T("Baic se 6", 58, "who")}
      </div>
    </header>
    <div class="body">
      <div class="page">
        <nav class="nav">
          <svg class="ic" width="18" height="14"><path d="M0 1.500h18M0 7h18M0 12.500h18" stroke="#eaf2f9" stroke-width="2.400"/></svg>
          ${T("Aghcott Healthdare Technnology", 241, "title")}${tri(7, "tri1")}${caret(11, 7)}
          <div class="f r">
            ${T("Viriome", 52)}
            <svg class="ic ml4" width="21" height="15" viewBox="0 0 21 15"><path d="M1 4V1h3v2h4V1h3v2h4V0h3v4h3v11H0V4Z" fill="#e9f1f8"/><path d="M1 5.500h18" stroke="#9bbad6"/></svg>
            ${T("Probjem Business", 124, "b")}
            ${T("Inshontaty Images", 125)}
            <svg class="ic apple" width="14" height="18" viewBox="22 0 14 18"><circle cx="29" cy="11" r="5.500" fill="none" stroke="#e4eef7" stroke-width="2"/><path d="M29 12l3-10h2M26 9l5 3" stroke="#e4eef7" stroke-width="1.600" fill="none"/></svg>
            ${T("Nitises", 43)}
            <span class="ml16"></span>${tri(10)}
          </div>
        </nav>
        <div class="tabs">
          <div class="tab">${T("Detuel Chodgo Craters", 144)}</div>
          <div class="tab on blue">${T("App Alono Sales:", 107)}<span class="ul"></span></div>
          <div class="tab blue">${T("Mesatres", 57)}</div>
          <div class="seg"><div class="l">${T("Slewfrh", 47)}</div><div class="rr">${T("Stere 200\\ Porces", 119)}</div></div>
        </div>
        <section class="search">
          <div>
            <h1>${T("Piro'Teer Provider Da Waps", 209)}</h1>
            <div class="f">
              <div class="box b1"><svg class="ic" width="20" height="20" viewBox="0 0 20 20"><circle cx="9.500" cy="9" r="7.500" fill="#e5eef6" stroke="#a9c2d8" stroke-width="2"/><path d="M6 8h7M15 15l4 3" stroke="#a9c2d8" stroke-width="1.500"/></svg>${T("Soarr I foenSoarerdoties", 144)}</div>
              <div class="box b2"><svg class="ic" width="23" height="23" viewBox="0 0 23 23"><circle cx="11.500" cy="11.500" r="11" fill="#7e8184"/><path d="M11.500 5v8M11.500 15v3" stroke="#f5f5f5" stroke-width="2.500"/></svg>${T("Comolate /atineach", 117)}
                <svg class="ic push" width="3" height="13"><path d="M1.500 0v3M1.500 5v3M1.500 10v3" stroke="#85898e" stroke-width="2.500"/></svg></div>
              <div class="box b3"><svg class="ic" width="14" height="15" viewBox="0 0 14 15"><circle cx="6" cy="6" r="4.800" fill="none" stroke="#42474d" stroke-width="1.900"/><path d="M9.500 10l4 4.500" stroke="#42474d" stroke-width="2.200"/></svg>${T("Whyis Hanty", 77)}<span class="dv"></span>
                <svg class="ic" width="4" height="10"><circle cx="2" cy="2" r="1.800" fill="#4a4d50"/><circle cx="2" cy="8" r="1.800" fill="#4a4d50"/></svg></div>
            </div>
          </div>
          <div class="vline"></div>
          <div class="round">
            <svg class="ic" width="37" height="37" viewBox="0 0 37 37"><path d="M9 18Q12 14 14 14Q17 7 22 10Q26 11 25 16Q24 18 26 20L30 23 25 29 20 25Q13 23 9 18Z" fill="#c8e0f5"/></svg>
            <svg class="ic cursor" width="14" height="19" viewBox="0 0 17 21"><path d="M1 1V16L5 13 8 19 11 18 8.500 12H14Z" fill="#fff" stroke="#2b2e33" stroke-width="1.500" stroke-linejoin="round"/></svg>
          </div>
        </section>

        <main class="grid">
          <section class="card">
            <div class="head"><h2>${T("Lanigion Listongs", 147)}</h2><span class="ml12"></span>${caret(12, 8)}<span class="push"></span>${T("Regoraot Av Tasd 1", 119, "sub")}<span class="ml8"></span><span class="ml16"></span></div>
            <div class="acct">${chev("navy")}<div><b>${T("Ariper Butwinger", 114)}</b><span>${T("Saige: Smath)", 76)}</span></div></div>
            <div class="line short"></div>
            <div class="f grp">${chev("navy")}
              <svg class="ic fold" width="17" height="15" viewBox="0 0 17 15"><path d="M1 14V1.500H16V14Z" fill="#fff" stroke="#2a5f97" stroke-width="1.900"/><circle cx="8" cy="8" r="1.300" fill="#2a5f97"/><path d="M3 1h5" stroke="#2a5f97" stroke-width="2"/></svg>${T("Pexwidies", 65)}</div>
            ${checks.map(([h, t, w, up, on]) => html`<div class="chk ${up ? "up" : ""}" style="height:${h}px"><i class=${on ? "on" : ""}>${on ? html`<svg width="10" height="10"><path d="M1.500 5l2.500 3L10 .5" fill="none" stroke="#1b4f8c" stroke-width="2.200"/></svg>` : nothing}</i>${T(t, w)}</div>`)}
          </section>

          <section class="card">
            <div class="head"><h2>${T("Pootidac Lintine Linerne", 198)}</h2>
              <svg class="ic ml8" width="20" height="16" viewBox="0 0 20 16"><path d="M0 1l6 2 7-3 6 2q2 7-3 11l-5 3Q3 12 2 7Z" fill="#6da9cd"/><path d="M4 4l5 4M12 4l-3 8M14 6l3 1" stroke="#b9dcee" stroke-width="1.500"/></svg>
              <span class="ml16"></span>${caret(11, 8)}<span class="ml12"></span><span class="ml2"></span>${T("RocinBeetthreed Lamoning", 164, "sub")}</div>
            <div class="f bar">${T("Morer Waren", 81)}
              <div class="box inp in2"><svg class="ic" width="12" height="16" viewBox="0 0 12 16"><path d="M6 15Q1 9 1 6Q1 1 6 1T11 6Q11 9 6 15Z" fill="none" stroke="#676c72" stroke-width="1.400"/></svg><span class="ml8"></span>${T("Chilconaad", 69)}<span class="dv push"></span><svg class="ic" width="33" height="11" viewBox="0 0 33 11"><path d="M17.500 1v9M13 5.500h9" stroke="#33373b" stroke-width="2.600"/></svg></div>
              <div class="f rq">${T("Raspent", 46)}${chev("", 10)}</div></div>
            <div class="line ln2"></div>
            <div class="f info">${T("Information Progranse", 132)}<span class="ml4"></span>${T("-(989)", 37, "blue")}<span class="push"></span>${T("Soalf Eixes", 67, "blue")}</div>
            <div class="line ln2"></div>
            ${programs.map((p) => html`<div class="hit ${p.cls}">
              <div class="icw"><svg class="ic" width=${p.iw} height=${p.ih}>${ico[p.icon]}</svg></div>
              <div class="tx"><div class="tt">${T(p.bold, p.bw, "bb")}${T(p.rest, p.rw, p.dim ? "dim" : "")}</div>
              ${p.desc.map((d) => html`<p>${T(d[0], d[1])}</p>`)}</div>
              ${p.a && p.b ? html`<div class="pair ${p.cls === "r2" ? "tp" : ""}">${T(p.a[0], p.a[1])}<i></i>${T(p.b[0], p.b[1])}</div>` : html`<div class="prim">${T("Sumers Onder", 87)}</div>`}
            </div>`)}
          </section>

          <section class="card">
            <div class="head"><span class="ml2"></span><h2>${T("Crotlputationd Costifuctims", 232)}</h2><span class="ml12"></span><span class="ml2"></span>${caret(11, 8)}${T("Programs", 65, "sub lg")}</div>
            <div class="f bar">
              <svg class="ic ring" width="16" height="16"><circle cx="8" cy="8" r="5.500" fill="none" stroke="#1f60a4" stroke-width="3.500"/></svg><span class="ml8"></span><span></span>${T("Toon Pry Nigier Prooien", 149)}
              <div class="box inp in3"><svg class="ic" width="15" height="15" viewBox="0 0 15 15"><path d="M1 14q3 0 3-4V6q1-5 4-4t0 6L6 9M11 9v5M9 11h5" fill="none" stroke="#60666d" stroke-width="1.500"/></svg><span class="ml8"></span>${T("Easdn", 39)}<span class="dv push"></span><svg class="ic" width="30" height="12" viewBox="0 0 30 12"><circle cx="15" cy="3" r="2.600" fill="#2f3337"/><path d="M13.500 4h3v4h3.500v3H10V8h3.500z" fill="#2f3337"/></svg></div>
              <svg class="ic badge" width="19" height="16"><rect width="19" height="16" rx="1" fill="#16599e"/><path d="M3 5h5M10 4l3 4 3-4M13 7v4" stroke="#bcd6ee" stroke-width="1.400" fill="none"/></svg>
            </div>
            <div class="cols">${columns.map((c) => html`<div class="col">${c.map((x) => this.cell(x))}</div>`)}</div>
            <div class="line rule3"></div>
            <div class="acts"><div class="a">${T("Cantimanr", 70)}</div><div class="b">${T("Smearh", 45)}</div></div>
          </section>

          <section class="card">
            <div class="head"><span class="ml2"></span><h2>${T("AUTR DT OBAS", 123)}</h2><span class="gap28"></span>${caret(13, 8)}</div>
            <div class="menu">${menu.map(([i, t, w], n) => html`<div class="mi ${n ? "" : "first"}">${n ? nothing : chev("chv")}<svg class="ic" width="18" height="18">${i}</svg>${T(t, w)}</div>`)}</div>
          </section>

          <section class="card wide">
            <div class="head mhead"><span class="ml2"></span><h2>${T("Provider Listing", 130)}</h2><span class="ml12"></span>${caret(13, 8)}
              <span class="push"></span>${T("Actress Tpidail", 91, "act")}<span class="ml12"></span>${caret(10, 7)}
              <div class="f pf">${T("PeisfarChies", 74)}${chev("dk", 12)}</div>
              ${caret(8, 6)}<svg class="ic tick" width="14" height="11"><path d="M1 6l4 4L13 1" stroke="#c1c5ca" stroke-width="1.800" fill="none"/></svg>
              <svg class="ic cloud" width="14" height="14" viewBox="0 0 14 14"><path d="M7 0Q12 0 13 5 15 8 13 11H9V13H5V11H1Q-1 8 1 5 2 0 7 0Z" fill="#4b5560"/><path d="M7 4v8M4.500 7L7 4l2.500 3" stroke="#dfe3e7" stroke-width="1.200" fill="none"/></svg>
              ${T("Melp", 28, "dk")}<span class="ml8"></span>${tri(10, "dk")}
              <span class="vsep"></span>
              <svg class="ic spot" width="13" height="15" viewBox="0 0 13 15"><path d="M6.500 0Q13 1 13 7 12 13 6.500 15 1 13 0 7 0 1 6.500 0Z" fill="#59636c"/><circle cx="6.500" cy="7" r="2.200" fill="#b7d2c4"/></svg>
              ${T("Poodtion☆", 66, "dk")}<span class="dash"></span>
            </div>
            <div class="mapw">
              <map-canvas></map-canvas>
              <div class="filter">
                <svg class="ic" width="11" height="11"><path d="M1 3l4-2M5 2v7M2 8l7-2" stroke="#d25b53" stroke-width="2.200"/></svg><span class="g5"></span>${T("Loo or", 34)}
                <svg class="ic ml4" width="8" height="12"><rect x=".7" y="1.500" width="6.600" height="10" fill="none" stroke="#666" stroke-width="1.400"/><path d="M2 5h4M2 8h4" stroke="#666"/></svg>
                <svg class="ic tag" width="9" height="11"><path d="M.7 1h7.600v4L4.500 10 .7 5z" fill="none" stroke="#888" stroke-width="1.200"/></svg>
                ${T("Coastoep Onibesn", 92)}<span class="end">${tri(10)}</span>
              </div>
              <div class="pop">
                <div class="up"><div><h3>${T("Priovider", 70)}</h3><ul>
                  ${([["Hasrdoni Eoleow", 101], ["Sceclopehtis Mir Wt129", 144], ["Spulog Ber Reseller VV'TR", 167], ["SacevlaBtu Stirrmia", 121], ["Reposad Set Kirok MA MSB", 171], ["Soler Exoerin", 81], ["Wool fine USOS", 103], ["Curoney Baved & Recoem IVGcO", 208], ["Foce MO Pev Imnh", 120]] as [string, number][]).map(([t, w]) => html`<li>${T(t, w)}</li>`)}
                </ul></div><div class="sb"></div></div>
                <div class="dn"><b>${T("Soan Provider", 97)}</b>${T("(38)", 26)}<div class="btn">${T("Gane Qreutt", 82)}</div></div>
              </div>
              <div class="zoom">${[true, false, false].map((p) => html`<span><svg class="ic" width="11" height="11"><path d="M0 5.500h11${p ? "M5.500 0v11" : ""}" stroke="#4d5156" stroke-width="2"/></svg></span>`)}</div>
              <div class="attr">${T("Annroncap Gaoles", 84)}${T("Oh Sdounpd", 56)}<svg class="ic" width="14" height="12"><rect width="14" height="12" fill="#a2a5a8"/><path d="M3 3h3v6M8 3h3l-3 6h4" stroke="#fff" fill="none"/></svg>${T("Curi/Esboporitiex", 70)}${T("Ido Sevut IG ZV/ Fsoarile", 98)}${T("Anro IILIst", 40)}</div>
            </div>
          </section>
        </main>
      </div>
      <div class="rail"><svg class="ic" width="9" height="8"><circle cx="6" cy="4" r="4" fill="#6b6d70"/></svg><div class="thumb"></div></div>
    </div>`;
  }
}
